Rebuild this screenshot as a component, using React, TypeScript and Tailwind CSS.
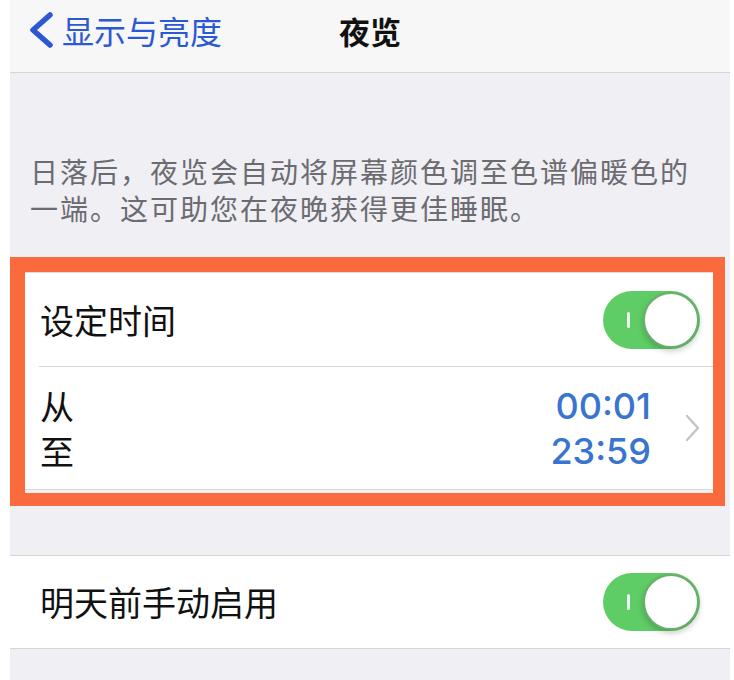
import React from 'react';

const cjk = { fontFamily: '"Noto Sans CJK SC", "Noto Sans", sans-serif' };

const Toggle: React.FC = () => (
  <div className="flex items-center w-[97px] h-[58px] rounded-full bg-[#5fcd66] pr-[1px]">
    <div className="ml-[24px] w-[3px] h-[16px] rounded-full bg-white/90" />
    <div className="ml-auto w-[56px] h-[56px] rounded-full bg-white border-[2px] border-[#6aae6e] shadow-[0_3px_6px_rgba(0,0,0,0.22)]" />
  </div>
);

const App: React.FC = () => {
  return (
    <div className="w-[734px] h-[680px] bg-white pl-[10px] overflow-hidden" style={cjk}>
      <div className="w-[720px] h-full flex flex-col bg-[#efeff4]">
        {/* Nav bar */}
        <div className="h-[73px] shrink-0 grid grid-cols-[1fr_auto_1fr] items-center bg-[#f7f7f8] border-b border-[#d6d6da] pb-[12px]">
          <div className="flex items-center pl-[17px] text-[#2c59d2]">
            <svg width="28" height="36" viewBox="0 0 28 36" fill="none">
              <path d="M23 3 L6 18 L23 33" stroke="currentColor" strokeWidth="5.5" strokeLinecap="round" strokeLinejoin="round" />
            </svg>
            <span className="ml-[7px] text-[32px] leading-none">显示与亮度</span>
          </div>
          <div className="text-[31px] font-bold text-[#111] leading-none">夜览</div>
          <div />
        </div>

        {/* Description */}
        <div className="pl-[20px] pt-[80px] pb-[30px] text-[28px] leading-[37px] tracking-[2px] text-[#6b6b70]">
          日落后，夜览会自动将屏幕颜色调至色谱偏暖色的<br />一端。这可助您在夜晚获得更佳睡眠。
        </div>

        {/* Highlighted schedule group */}
        <div className="w-[715px] border-[#fb6a3c] border-l-[15px] border-t-[15px] border-r-[12px] border-b-[13px] bg-[#f0f0f3]">
          <div className="bg-white border-t border-[#dcdce0]">
            <div className="h-[93px] flex items-center pl-[15px] pr-[13px]">
              <span className="text-[34px] text-[#111] leading-none">设定时间</span>
              <div className="ml-auto">
                <Toggle />
              </div>
            </div>
            <div className="ml-[14px] border-t border-[#d8d8dc]" />
            <div className="h-[122px] flex items-center pl-[15px] pr-[13px]">
              <div className="flex flex-col text-[34px] text-[#111] leading-[45px]">
                <span>从</span>
                <span>至</span>
              </div>
              <div
                className="ml-auto flex flex-col items-end text-[36px] font-medium text-[#3a74cf] leading-[45px] mt-[2px]"
                style={{ fontFamily: 'Inter, "Liberation Sans", sans-serif' }}
              >
                <span>00:01</span>
                <span>23:59</span>
              </div>
              <svg className="ml-[33px]" width="16" height="28" viewBox="0 0 16 28" fill="none">
                <path d="M3 2 L14 14 L3 26" stroke="#c4c4c9" strokeWidth="2.4" strokeLinecap="round" strokeLinejoin="round" />
              </svg>
            </div>
          </div>
          <div className="border-t border-[#d8d8dc] h-[4px] bg-[#f2f2f4]" />
        </div>

        {/* Manual enable row */}
        <div className="mt-[49px] h-[94px] shrink-0 bg-white border-t border-b border-[#d6d6da] flex items-center pl-[30px] pr-[30px]">
          <span className="text-[34px] text-[#111] leading-none">明天前手动启用</span>
          <div className="ml-auto">
            <Toggle />
          </div>
        </div>
      </div>
    </div>
  );
};

export default App;
